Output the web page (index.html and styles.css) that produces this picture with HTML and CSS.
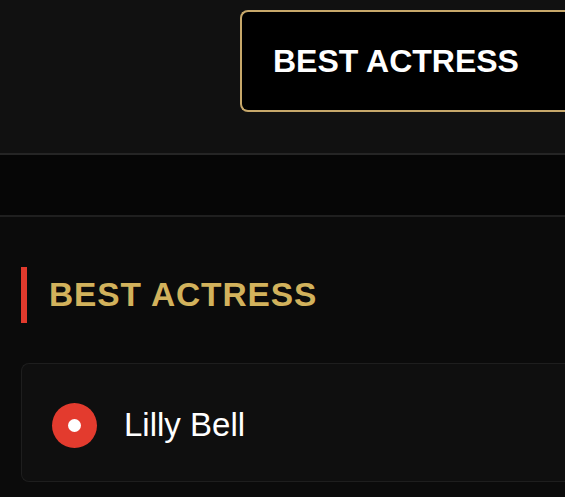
FILE: index.html
```html
<!DOCTYPE html>
<html lang="en">
<head>
    <meta charset="UTF-8">
    <meta name="viewport" content="width=device-width, initial-scale=1.0">
    <title>Ballot</title>
    <link rel="stylesheet" href="styles.css">
</head>
<body>

<!-- Category Tabs -->
<header class="category-bar">
    <button class="category-tab active">BEST ACTRESS</button>
</header>

<!-- Sub Nav -->
<nav class="sub-nav"></nav>

<main class="ballot">
    <h2 class="section-title">BEST ACTRESS</h2>

    <label class="nominee">
        <span class="radio checked"></span>
        <span class="nominee-name">Lilly Bell</span>
    </label>
</main>

</body>
</html>
```

FILE: styles.css
```css
/* Global Styling */
body {
    font-family: 'Liberation Sans', Arial, sans-serif;
    background-color: #0b0b0b;
    margin: 0;
    overflow: hidden;
}

/* Category Tabs - the active tab runs on past the right edge */
.category-bar {
    display: flex;
    padding: 10px 0 41px 240px;
    background-color: #111111;
    border-bottom: 2px solid #252525;
}

.category-tab {
    flex: 1;
    height: 102px;
    padding: 0 31px;
    text-align: left;
    font-family: inherit;
    font-size: 32px;
    font-weight: bold;
    color: #ffffff;
    background-color: #000000;
    border: 2px solid #c7a86a;
    border-right: none;
    border-radius: 8px 0 0 8px;
}

/* Sub Nav */
.sub-nav {
    height: 60px;
    background-color: #060606;
    border-bottom: 2px solid #1f1f1f;
}

/* Ballot */
.ballot {
    padding: 50px 0 0 21px;
}

.section-title {
    margin: 0 0 40px;
    height: 56px;
    display: flex;
    align-items: center;
    padding-left: 22px;
    border-left: 6px solid #e23a2d;
    font-size: 33.5px;
    letter-spacing: 0.9px;
    color: #d2b25c;
}

/* Nominee Card */
.nominee {
    display: flex;
    align-items: center;
    gap: 27px;
    height: 119px;
    padding: 5px 0 0 30px;
    box-sizing: border-box;
    background-color: #0f0f0f;
    border: 1.5px solid #1e1e1e;
    border-right: none;
    border-radius: 8px 0 0 8px;
}

.radio {
    width: 45px;
    height: 45px;
    border-radius: 50%;
    background-color: #e33b2e;
    display: flex;
    justify-content: center;
    align-items: center;
}

.radio.checked::after {
    content: '';
    width: 13px;
    height: 13px;
    border-radius: 50%;
    background-color: #ffffff;
}

.nominee-name {
    font-size: 33px;
    color: #ffffff;
}
```
